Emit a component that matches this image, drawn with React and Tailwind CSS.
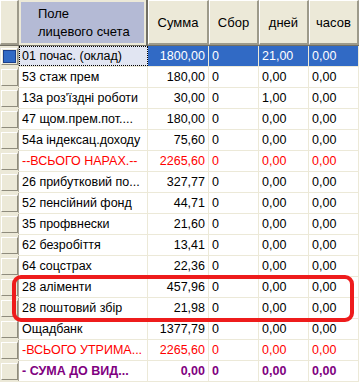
import React from 'react';

const rows = [
  { name: '01 почас. (оклад)', sum: '1800,00', fee: '0', days: '21,00', hours: '0,00', selected: true },
  { name: '53 стаж прем', sum: '180,00', fee: '0', days: '0,00', hours: '0,00' },
  { name: "13а роз'їздні роботи", sum: '30,00', fee: '0', days: '1,00', hours: '0,00' },
  { name: '47 щом.прем.пот....', sum: '180,00', fee: '0', days: '0,00', hours: '0,00' },
  { name: '54а індексац.доходу', sum: '75,60', fee: '0', days: '0,00', hours: '0,00' },
  { name: '--ВСЬОГО НАРАХ.--', sum: '2265,60', fee: '0', days: '0,00', hours: '0,00', kind: 'red' },
  { name: '26 прибутковий по...', sum: '327,77', fee: '0', days: '0,00', hours: '0,00' },
  { name: '52 пенсійний фонд', sum: '44,71', fee: '0', days: '0,00', hours: '0,00' },
  { name: '35 профвнески', sum: '21,60', fee: '0', days: '0,00', hours: '0,00' },
  { name: '62 безробіття', sum: '13,41', fee: '0', days: '0,00', hours: '0,00' },
  { name: '64 соцстрах', sum: '22,36', fee: '0', days: '0,00', hours: '0,00' },
  { name: '28 аліменти', sum: '457,96', fee: '0', days: '0,00', hours: '0,00' },
  { name: '28 поштовий збір', sum: '21,98', fee: '0', days: '0,00', hours: '0,00' },
  { name: 'Ощадбанк', sum: '1377,79', fee: '0', days: '0,00', hours: '0,00' },
  { name: '-ВСЬОГО УТРИМА...', sum: '2265,60', fee: '0', days: '0,00', hours: '0,00', kind: 'red' },
  { name: '- СУМА ДО ВИД...', sum: '0,00', fee: '0', days: '0,00', hours: '0,00', kind: 'total' },
];

// заголовок колонки в стиле кнопки XP
const HeadCell = ({ className = '', children }) => (
  <div
    className={`flex items-center justify-center border-t border-l border-t-white border-l-white border-r-2 border-b-2 border-r-[#9d9a8a] border-b-[#9d9a8a] bg-[#ece9d8] ${className}`}
  >
    {children}
  </div>
);

const Indicator = ({ selected }) => (
  <div className="flex h-full w-[19px] shrink-0 items-center justify-center border-r border-[#aca899] bg-[#ece9d8]">
    <div className="h-[17px] w-[17px] border-t border-l border-t-white border-l-white border-r border-b border-r-[#8f8c7d] border-b-[#8f8c7d] p-[1px]">
      {selected ? (
        <div className="h-full w-full border border-[#1c3f8a] bg-[#316ac5]" />
      ) : (
        <div className="h-full w-full bg-[#ece9d8]" />
      )}
    </div>
  </div>
);

export default function App() {
  return (
    <div
      className="relative h-[384px] w-[359px] overflow-hidden bg-white text-[12px] leading-none text-black"
      style={{ fontFamily: '"Liberation Sans", Arial, sans-serif' }}
    >
      {/* шапка */}
      <div className="flex h-[46px] border-b border-[#716f64]">
        <HeadCell className="w-[19px]" />
        <div className="flex w-[129px] items-center border-r-2 border-[#716f64] bg-[#ece9d8] p-[2px]">
          <div className="flex h-full w-full flex-col justify-center bg-[#b4bad5] pl-[17px] leading-[18px] text-[13px]">
            <span>Поле</span>
            <span>лицевого счета</span>
          </div>
        </div>
        <HeadCell className="w-[61px] text-[13px]">Сумма</HeadCell>
        <HeadCell className="w-[50px] text-[13px]">Сбор</HeadCell>
        <HeadCell className="w-[50px] text-[13px]">дней</HeadCell>
        <HeadCell className="w-[50px] text-[13px]">часов</HeadCell>
      </div>

      {/* строки */}
      {rows.map((r) => {
        const color =
          r.kind === 'red'
            ? 'text-[#ff0000]'
            : r.kind === 'total'
            ? 'text-[#800080] font-bold'
            : r.selected
            ? 'text-white'
            : 'text-black';
        const cell = 'flex h-full items-center overflow-hidden whitespace-nowrap border-r border-[#ece9d8] px-[3px]';
        return (
          <div key={r.name} className="flex h-[21px] border-b border-[#ece9d8] text-[12.5px]">
            <Indicator selected={r.selected} />
            <div
              className={`${cell} w-[129px] ${
                r.selected ? 'border border-dotted border-black bg-[#e1e5f2] pl-[2px]' : ''
              } ${r.kind === 'red' ? 'text-[#ff0000]' : r.kind === 'total' ? 'font-bold text-[#800080]' : 'text-black'}`}
            >
              {r.name}
            </div>
            <div className={`${cell} w-[61px] justify-end ${r.selected ? 'bg-[#316ac5]' : ''} ${color}`}>{r.sum}</div>
            <div className={`${cell} w-[50px] ${r.selected ? 'bg-[#316ac5]' : ''} ${color}`}>{r.fee}</div>
            <div className={`${cell} w-[50px] ${r.selected ? 'bg-[#316ac5]' : ''} ${color}`}>{r.days}</div>
            <div className={`${cell} w-[50px] ${r.selected ? 'bg-[#316ac5]' : ''} ${color}`}>{r.hours}</div>
          </div>
        );
      })}

      {/* красная рамка-выделение */}
      <div className="pointer-events-none absolute left-[12px] top-[275px] h-[47px] w-[342px] rounded-[9px] border-4 border-[#ee1c1c]" />
    </div>
  );
}
